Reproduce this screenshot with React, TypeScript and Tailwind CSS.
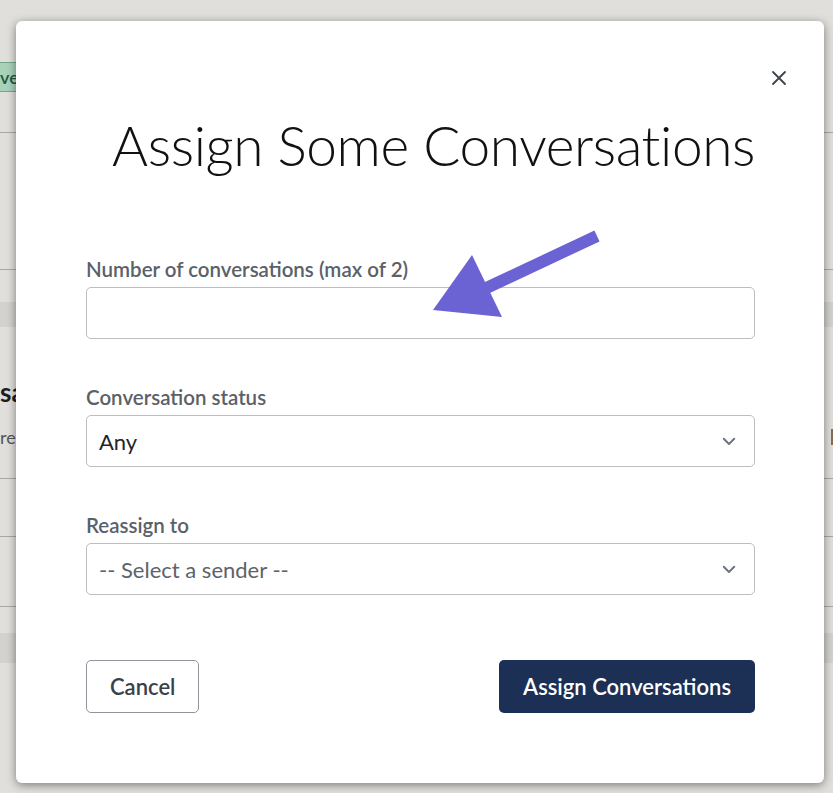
import React from 'react';

function Chevron() {
  return (
    <svg width="18" height="18" viewBox="0 0 24 24" fill="none" stroke="#6c757d" strokeWidth="2.6" strokeLinecap="round" strokeLinejoin="round">
      <path d="M5 9l7 7 7-7" />
    </svg>
  );
}

function SelectBox({ value, muted }: { value: string; muted?: boolean }) {
  return (
    <div className="flex h-[52px] items-center justify-between rounded-[5px] border border-[#babec2] bg-white pl-[12px] pr-[16px]">
      <span className={muted ? 'text-[22px] text-[#5c636a]' : 'text-[22px] text-[#212529]'}>{value}</span>
      <Chevron />
    </div>
  );
}

function Field({ label, children }: { label: string; children: React.ReactNode }) {
  return (
    <div className="flex flex-col gap-[6px]">
      <label className="whitespace-nowrap text-[20.5px] font-semibold leading-[24px] text-[#5a6169]">{label}</label>
      {children}
    </div>
  );
}

function PageBehind() {
  // the dimmed page under the dialog, only its edges show
  return (
    <div className="flex h-full flex-col">
      <div className="h-[62px]" />
      <div className="flex h-[30px] items-center">
        <span className="rounded-r-[3px] border-y border-r border-[#6fa889] bg-[#a9d2bb] pr-[6px] text-[18px] font-semibold leading-[28px] text-[#1f5a3d]">ve</span>
      </div>
      <div className="h-[41px] border-b border-[#a8a8a6]" />
      <div className="h-[137px] border-b border-[#a8a8a6]" />
      <div className="h-[32px]" />
      <div className="h-[25px] bg-[#d3d2cf]" />
      <div className="h-[50px]" />
      <div className="whitespace-nowrap text-[26px] font-bold leading-[30px] text-[#1e1e1e]">sa</div>
      <div className="mt-[18px] flex items-center justify-between">
        <span className="text-[18px] leading-[24px] text-[#555]">re</span>
        <span className="mr-[-8px] h-[16px] w-[10px] bg-[#8a6d4f]" />
      </div>
      <div className="h-[30px] border-b border-[#a8a8a6]" />
      <div className="h-[58px] border-b border-[#a8a8a6]" />
      <div className="h-[70px] border-b border-[#a8a8a6]" />
      <div className="h-[26px]" />
      <div className="h-[30px] bg-[#d3d2cf]" />
    </div>
  );
}

export default function App() {
  return (
    <div className="relative h-[793px] w-[833px] overflow-hidden bg-[#e0dfdc] font-['Lato','Noto_Sans',sans-serif]">
      <PageBehind />

      <div className="absolute left-[16px] top-[21px] flex h-[762px] w-[808px] flex-col rounded-[6px] bg-white pl-[70px] pr-[69px] shadow-[0_2px_10px_rgba(0,0,0,0.45)]">
        <button className="absolute right-[36px] top-[48px] flex h-[18px] w-[18px] items-center justify-center text-[#3d434a]">
          <svg width="16" height="16" viewBox="0 0 16 16" stroke="currentColor" strokeWidth="1.8" strokeLinecap="round">
            <path d="M2 2l12 12M14 2L2 14" />
          </svg>
        </button>

        <h1 className="mt-[88px] whitespace-nowrap text-right text-[55px] font-light leading-[72px] tracking-[-0.4px] text-[#111]">Assign Some Conversations</h1>

        <div className="mt-[76px] flex flex-col gap-[46px]">
          <Field label="Number of conversations (max of 2)">
            <input className="h-[52px] rounded-[5px] border border-[#babec2] bg-white px-[12px] text-[22px] outline-none" />
          </Field>
          <Field label="Conversation status">
            <SelectBox value="Any" />
          </Field>
          <Field label="Reassign to">
            <SelectBox value="-- Select a sender --" muted />
          </Field>
        </div>

        <div className="mt-[65px] flex items-center justify-between">
          <button className="h-[53px] rounded-[5px] border border-[#8f959b] bg-white px-[23px] text-[22px] font-semibold text-[#3a4149]">Cancel</button>
          <button className="h-[53px] rounded-[5px] bg-[#1b3054] px-[24px] text-[22px] font-semibold text-white">Assign Conversations</button>
        </div>
      </div>

      <svg className="pointer-events-none absolute left-0 top-0" width="833" height="793" viewBox="0 0 833 793">
        <line x1="597" y1="236" x2="480" y2="291" stroke="#6b63d4" strokeWidth="12" />
        <polygon points="433,310 472,255 502,317" fill="#6b63d4" />
      </svg>
    </div>
  );
}
